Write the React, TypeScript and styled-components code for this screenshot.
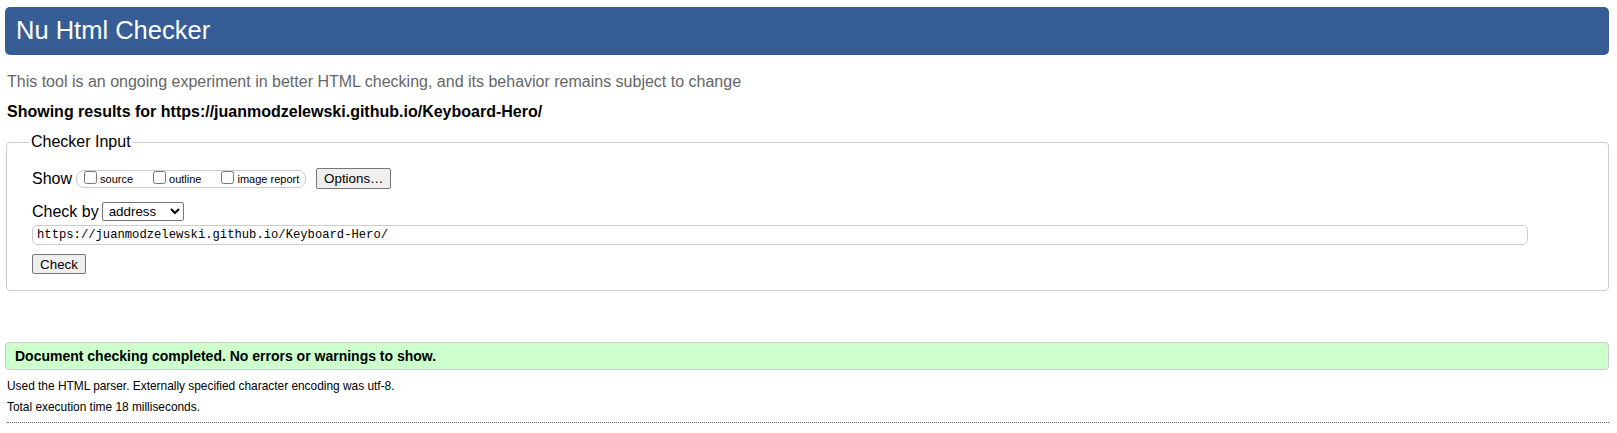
import styled, { createGlobalStyle } from "styled-components";
import { useState } from "react";

const GlobalStyle = createGlobalStyle`
  html, body {
    margin: 0;
    padding: 0;
    background: #ffffff;
  }
  body {
    font-family: "Liberation Sans", Arial, sans-serif;
    color: #000;
  }
`;

const Page = styled.div`
  padding: 7px 8px 0 5px;
`;

const Header = styled.h1`
  margin: 0;
  height: 48px;
  line-height: 47px;
  padding-left: 11px;
  background-color: #365d95;
  border-radius: 5px;
  color: #ffffff;
  font-size: 25.5px;
  font-weight: normal;
`;

const Intro = styled.p`
  margin: 18px 0 0 2px;
  font-size: 16px;
  line-height: 18px;
  color: #666666;
`;

const Results = styled.p`
  margin: 12px 0 0 2px;
  font-size: 16px;
  line-height: 18px;
  font-weight: bold;
`;

const Fieldset = styled.fieldset`
  margin: 12px 0 0 1px;
  padding: 0 0 16px 25px;
  border: 1px solid #cccccc;
  border-radius: 4px;
  min-width: 0;
`;

const Legend = styled.legend`
  margin-left: -3px;
  padding: 0 2px;
  font-size: 16px;
  line-height: 18px;
`;

const Row = styled.div<{ $top: number }>`
  display: flex;
  align-items: center;
  height: 21px;
  margin-top: ${(p) => p.$top}px;
  font-size: 16px;
`;

const ShowLabel = styled.span`
  margin-right: 4px;
`;

const OptionGroup = styled.div`
  display: flex;
  align-items: center;
  height: 16px;
  padding: 0 6px 0 3px;
  border: 1px solid #cccccc;
  border-radius: 8px;
`;

const Choice = styled.label`
  display: flex;
  align-items: center;
  font-size: 11px;
  margin-right: 16px;

  &:last-child {
    margin-right: 0;
  }

  input {
    width: 13px;
    height: 13px;
    margin: 0 3px 2px 4px;
  }
`;

const Button = styled.button<{ $w: number }>`
  width: ${(p) => p.$w}px;
  height: 21px;
  padding: 0;
  font-family: "Liberation Sans", Arial, sans-serif;
  font-size: 13.33px;
  color: #000;
  background: #efefef;
  border: 1px solid #767676;
  border-radius: 2px;
`;

const OptionsButton = styled(Button)`
  margin-left: 10px;
`;

const CheckButton = styled(Button)`
  display: block;
  height: 20px;
  margin-top: 9px;
`;

const Select = styled.select`
  width: 82px;
  height: 19px;
  margin-left: 3px;
  font-family: "Liberation Sans", Arial, sans-serif;
  font-size: 13.33px;
  color: #000;
  background: #fff;
  border: 1px solid #767676;
  border-radius: 2px;
  padding: 0 0 0 2px;
`;

const UrlInput = styled.input`
  display: block;
  box-sizing: border-box;
  width: 1496px;
  height: 20px;
  margin-top: 3px;
  padding: 0 4px;
  font-family: "Liberation Mono", "DejaVu Sans Mono", monospace;
  font-size: 12.2px;
  color: #000;
  border: 1px solid #cccccc;
  border-radius: 5px;
  outline: none;
`;

const Success = styled.div`
  margin-top: 51px;
  height: 26px;
  line-height: 26px;
  padding-left: 9px;
  background: #ccffcc;
  border: 1px solid #cccccc;
  border-radius: 4px;
  font-size: 14px;
  font-weight: bold;
`;

const Detail = styled.p<{ $top: number }>`
  margin: ${(p) => p.$top}px 0 0 2px;
  font-size: 11.9px;
  line-height: 14px;
`;

const Rule = styled.hr`
  margin: 8px 0 0 2px;
  border: 0;
  border-top: 1px dotted #666666;
  height: 0;
`;

export default function App() {
  const [mode, setMode] = useState("address");
  const [url, setUrl] = useState("https://juanmodzelewski.github.io/Keyboard-Hero/");

  return (
    <Page>
      <GlobalStyle />
      <Header>Nu Html Checker</Header>
      <Intro>
        This tool is an ongoing experiment in better HTML checking, and its behavior remains subject to change
      </Intro>
      <Results>Showing results for https://juanmodzelewski.github.io/Keyboard-Hero/</Results>
      <form onSubmit={(e) => e.preventDefault()}>
        <Fieldset>
          <Legend>Checker Input</Legend>
          <Row $top={17}>
            <ShowLabel>Show</ShowLabel>
            <OptionGroup>
              <Choice>
                <input type="checkbox" />
                source
              </Choice>
              <Choice>
                <input type="checkbox" />
                outline
              </Choice>
              <Choice>
                <input type="checkbox" />
                image report
              </Choice>
            </OptionGroup>
            <OptionsButton type="button" $w={75}>
              Options…
            </OptionsButton>
          </Row>
          <Row $top={12}>
            <span>Check by</span>
            <Select value={mode} onChange={(e) => setMode(e.target.value)}>
              <option value="address">address</option>
              <option value="file">file upload</option>
              <option value="text">text input</option>
            </Select>
          </Row>
          <UrlInput value={url} onChange={(e) => setUrl(e.target.value)} />
          <CheckButton type="submit" $w={54}>
            Check
          </CheckButton>
        </Fieldset>
      </form>
      <Success>Document checking completed. No errors or warnings to show.</Success>
      <Detail $top={9}>Used the HTML parser. Externally specified character encoding was utf-8.</Detail>
      <Detail $top={7}>Total execution time 18 milliseconds.</Detail>
      <Rule />
    </Page>
  );
}
